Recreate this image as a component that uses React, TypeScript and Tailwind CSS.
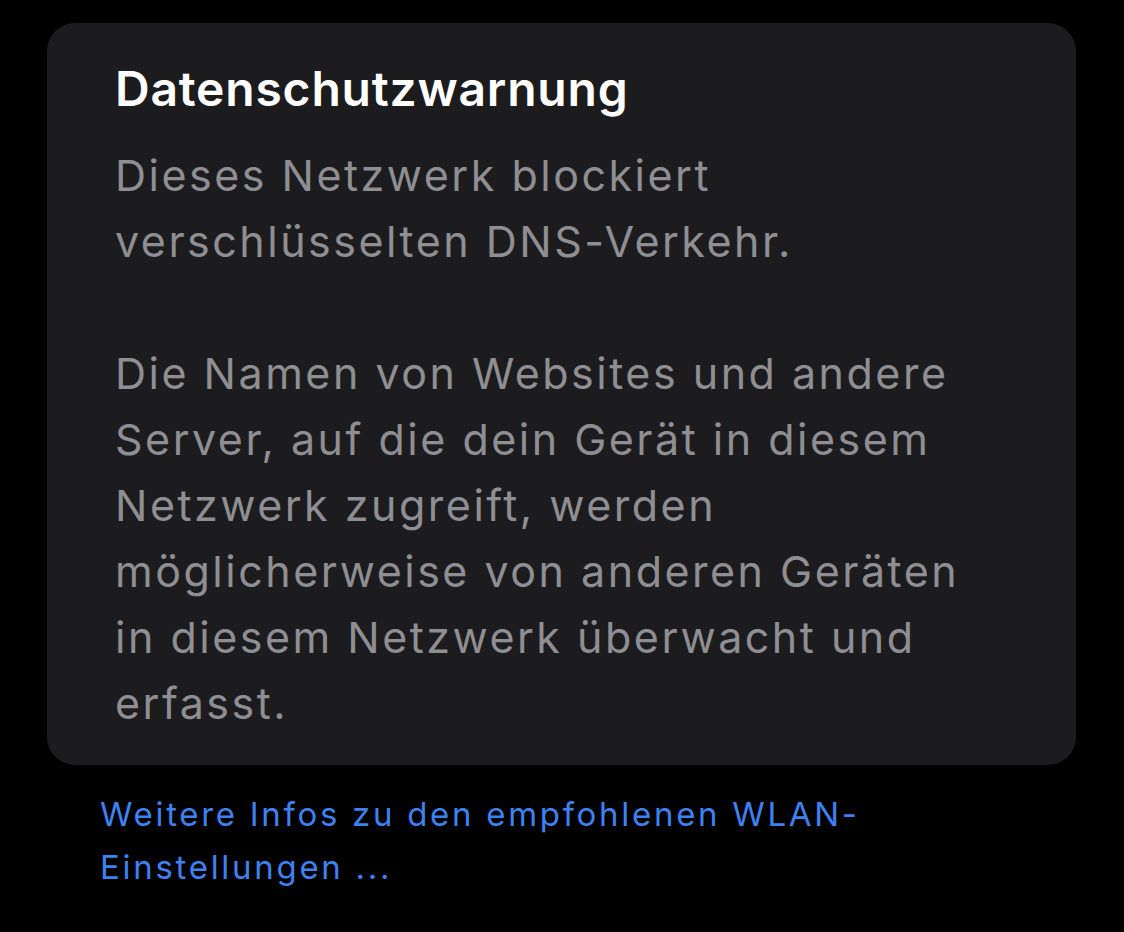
import React from 'react';

const App = () => {
  return (
    <div
      className="min-h-[932px] w-full bg-black pt-[23px]"
      style={{ fontFamily: 'Inter, "Noto Sans", sans-serif' }}
    >
      {/* Warning card */}
      <div className="ml-[47px] w-[1029px] rounded-[28px] bg-[#1c1c1e] pl-[68px] pr-[40px] pt-[38px] pb-[29px]">
        <h2 className="mb-[25px] text-[48px] font-semibold leading-[56px] tracking-[0.8px] text-white">
          Datenschutzwarnung
        </h2>
        <p className="text-[43px] leading-[66px] tracking-[2.5px] text-[#8e8e93]">
          Dieses Netzwerk blockiert
          <br />
          verschlüsselten DNS-Verkehr.
        </p>
        <p className="mt-[66px] text-[43px] leading-[66px] tracking-[2.5px] text-[#8e8e93]">
          Die Namen von Websites und andere
          <br />
          Server, auf die dein Gerät in diesem
          <br />
          Netzwerk zugreift, werden
          <br />
          möglicherweise von anderen Geräten
          <br />
          in diesem Netzwerk überwacht und
          <br />
          erfasst.
        </p>
      </div>

      {/* Footer link */}
      <a className="ml-[100px] mt-[23px] block text-[33px] leading-[53px] tracking-[2.7px] text-[#3d82f0]">
        Weitere Infos zu den empfohlenen WLAN-
        <br />
        Einstellungen ...
      </a>
    </div>
  );
};

export default App;
